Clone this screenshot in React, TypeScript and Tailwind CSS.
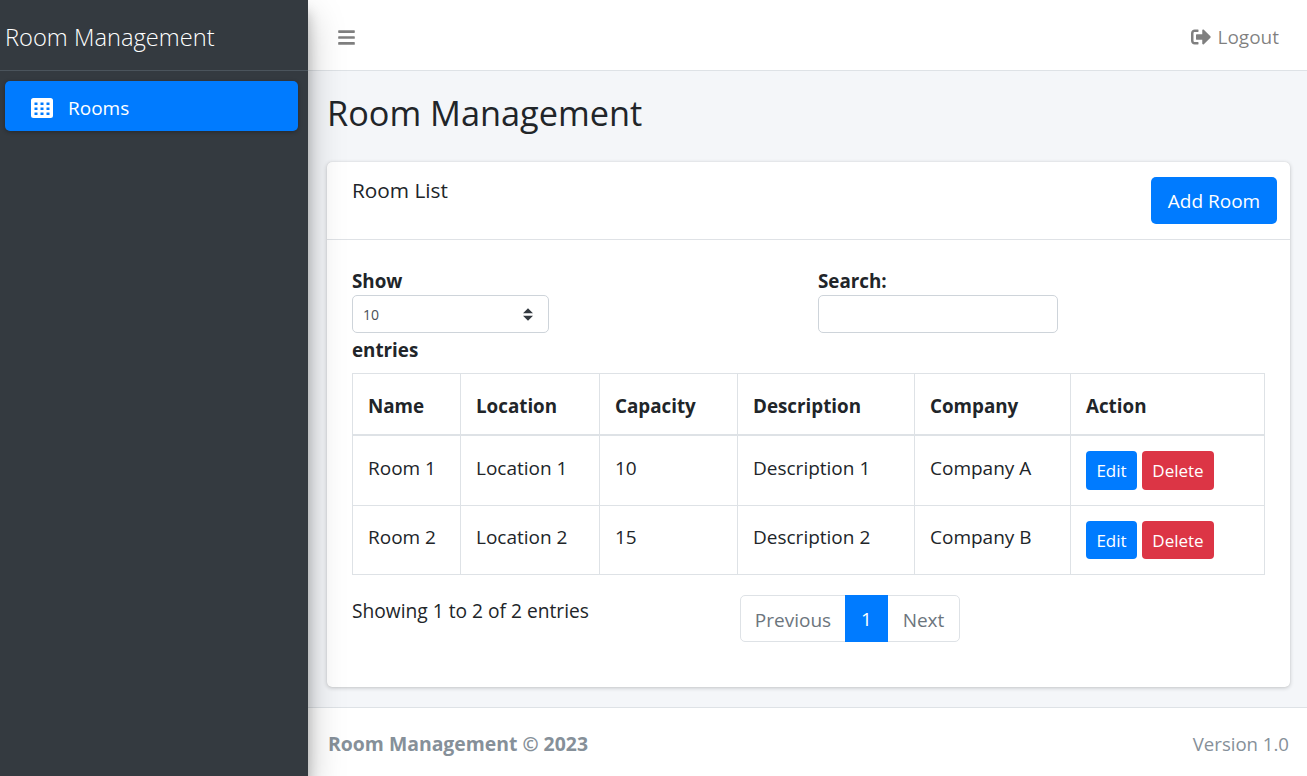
import React from 'react'
import { FaBars, FaSignOutAlt } from 'react-icons/fa'

const ROOMS = [
  { name: 'Room 1', location: 'Location 1', capacity: '10', description: 'Description 1', company: 'Company A', rowClass: 'h-[71px]', cellPad: 'pb-[4px]', btnHeight: 'h-[39px]' },
  { name: 'Room 2', location: 'Location 2', capacity: '15', description: 'Description 2', company: 'Company B', rowClass: 'h-[69px]', cellPad: 'pb-[6px]', btnHeight: 'h-[38px]' },
]

const COLUMNS = ['Name', 'Location', 'Capacity', 'Description', 'Company', 'Action']
const COL_WIDTHS = ['w-[108px]', 'w-[139px]', 'w-[138px]', 'w-[177px]', 'w-[156px]', 'w-[194px]']

function GridIcon() {
  return (
    <svg viewBox="0 0 22 20" className="mr-[15px] h-[20px] w-[22px] fill-white">
      <path
        fillRule="evenodd"
        d="M2.5 0h17A2.5 2.5 0 0 1 22 2.5v15a2.5 2.5 0 0 1-2.5 2.5h-17A2.5 2.5 0 0 1 0 17.5v-15A2.5 2.5 0 0 1 2.5 0zM3.5 4.5v2.5h3V4.5zm6 0v2.5h3V4.5zm6 0v2.5h3V4.5zM3.5 9.5v2.5h3V9.5zm6 0v2.5h3V9.5zm6 0v2.5h3V9.5zM3.5 14.5v2.5h3v-2.5zm6 0v2.5h3v-2.5zm6 0v2.5h3v-2.5z"
      />
    </svg>
  )
}

export default function App() {
  return (
    <div className="flex h-[776px] overflow-hidden bg-[#f4f6f9] font-['Open_Sans','Noto_Sans',sans-serif] text-[19px] text-[#212529]">
      {/* Sidebar */}
      <aside className="relative z-10 w-[308px] shrink-0 bg-[#343a40] shadow-[0_17px_34px_rgba(0,0,0,0.25),0_12px_12px_rgba(0,0,0,0.22)]">
        <div className="flex h-[71px] items-center border-b border-[#4b545c] pl-[5px] pt-[5px] text-[23.7px] font-light text-white">
          Room Management
        </div>
        <nav className="px-[5px] pt-[10px]">
          <a className="flex h-[50px] w-[293px] items-center rounded-[5px] bg-[#007bff] pl-[26px] pt-[4px] text-white shadow-[0_1px_4px_rgba(0,0,0,0.3)]">
            <GridIcon />
            Rooms
          </a>
        </nav>
      </aside>

      <div className="flex min-w-0 flex-1 flex-col">
        {/* Top bar */}
        <header className="flex h-[71px] shrink-0 items-center justify-between border-b border-[#dee2e6] bg-white pl-[29px] pr-[28px] pt-[4px] text-[#00000080]">
          <FaBars className="text-[19px]" />
          <div className="flex items-center gap-[6px]">
            <FaSignOutAlt className="text-[20px]" />
            Logout
          </div>
        </header>

        <main className="flex-1 pl-[19px] pr-[17px]">
          <h1 className="pt-[19px] pb-[26px] text-[34.3px] leading-[46px] font-normal">Room Management</h1>

          <section className="h-[525px] rounded-[5px] bg-white shadow-[0_0_1px_rgba(0,0,0,0.125),0_1px_4px_rgba(0,0,0,0.2)]">
            <div className="flex h-[78px] items-start justify-between border-b border-[#dfe2e6] pl-[25px] pr-[13px]">
              <h3 className="pt-[13px] text-[20.8px] leading-[30px] font-normal">Room List</h3>
              <button className="mt-[15px] h-[47px] w-[126px] rounded-[5px] bg-[#007bff] pt-[2px] text-white">Add Room</button>
            </div>

            <div className="px-[25px] pt-[28px]">
              <div className="flex items-start">
                <div className="w-[466px]">
                  <label className="block text-[18.8px] leading-[27px] font-bold">Show</label>
                  <div className="flex h-[38px] w-[197px] items-center justify-between rounded-[5px] border border-[#ced4da] pl-[10px] pr-[15px] text-[14px] text-[#495057]">
                    10
                    <svg viewBox="0 0 4 5" className="h-[13px] w-[10px] fill-[#343a40]">
                      <path d="M2 0L0 2h4zm0 5L0 3h4z" />
                    </svg>
                  </div>
                  <div className="mt-[4px] text-[18.8px] leading-[26px] font-bold">entries</div>
                </div>
                <div>
                  <label className="block text-[18.8px] leading-[27px] font-bold">Search:</label>
                  <input className="block h-[38px] w-[240px] rounded-[5px] border border-[#ced4da] bg-white" />
                </div>
              </div>

              <table className="mt-[10px] w-[912px] table-fixed border-collapse">
                <colgroup>
                  {COL_WIDTHS.map(w => <col key={w} className={w} />)}
                </colgroup>
                <thead>
                  <tr className="h-[61px]">
                    {COLUMNS.map(c => (
                      <th key={c} className="border border-b-2 border-[#dee2e6] pl-[15px] pt-[5px] text-left text-[18.8px] font-bold">{c}</th>
                    ))}
                  </tr>
                </thead>
                <tbody>
                  {ROOMS.map(r => (
                    <tr key={r.name} className={r.rowClass}>
                      <td className={`border border-[#dee2e6] pl-[15px] ${r.cellPad}`}>{r.name}</td>
                      <td className={`border border-[#dee2e6] pl-[15px] ${r.cellPad}`}>{r.location}</td>
                      <td className={`border border-[#dee2e6] pl-[15px] ${r.cellPad}`}>{r.capacity}</td>
                      <td className={`border border-[#dee2e6] pl-[15px] ${r.cellPad}`}>{r.description}</td>
                      <td className={`border border-[#dee2e6] pl-[15px] ${r.cellPad}`}>{r.company}</td>
                      <td className="border border-[#dee2e6] pl-[15px]">
                        <div className="flex gap-[5px]">
                          <button className={`w-[51px] rounded-[4px] bg-[#007bff] pt-[1px] text-[17px] text-white ${r.btnHeight}`}>Edit</button>
                          <button className={`w-[72px] rounded-[4px] bg-[#dc3545] pt-[1px] text-[17px] text-white ${r.btnHeight}`}>Delete</button>
                        </div>
                      </td>
                    </tr>
                  ))}
                </tbody>
              </table>

              <div className="mt-[20px] flex items-start">
                <div className="w-[388px] pt-[3px] text-[19.2px] leading-[26px]">Showing 1 to 2 of 2 entries</div>
                <div className="flex h-[47px] rounded-[5px] border border-[#dee2e6] text-[#6c757d]">
                  <span className="flex w-[104px] items-center justify-center pt-[4px]">Previous</span>
                  <span className="-my-px flex h-[47px] w-[43px] items-center justify-center bg-[#007bff] pt-[2px] text-white">1</span>
                  <span className="flex w-[71px] items-center justify-center pt-[4px]">Next</span>
                </div>
              </div>
            </div>
          </section>
        </main>

        {/* Footer */}
        <footer className="flex h-[69px] shrink-0 items-center justify-between border-t border-[#dee2e6] bg-white pl-[20px] pr-[18px] pt-[4px] text-[#869099]">
          <strong className="text-[19.4px] font-bold">Room Management © 2023</strong>
          <span className="text-[18.6px]">Version 1.0</span>
        </footer>
      </div>
    </div>
  )
}
